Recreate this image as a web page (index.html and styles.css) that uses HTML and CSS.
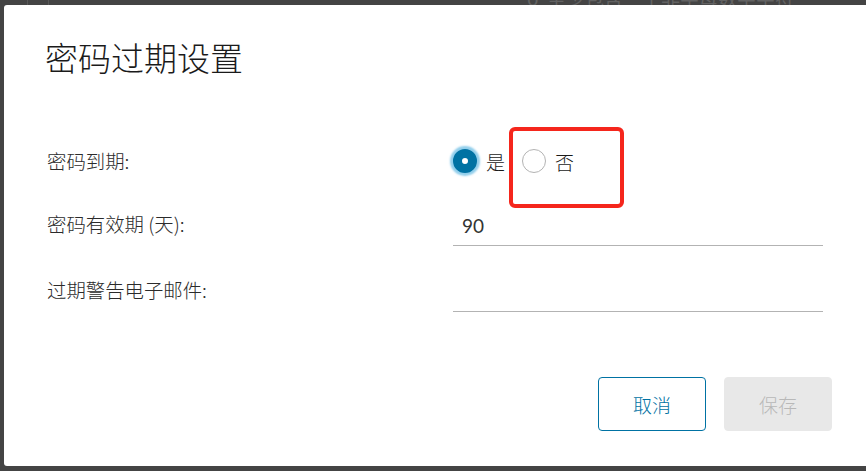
FILE: index.html
```html
<!DOCTYPE html>
<html lang="zh-CN">
<head>
<meta charset="utf-8">
<title>密码过期设置</title>
<link rel="stylesheet" href="styles.css">
</head>
<body>
  <div class="backdrop">
    <span class="hint">o&nbsp;&nbsp;至少包含一个非字母数字字符</span>
    <i class="vline vline-a"></i>
    <i class="vline vline-b"></i>
  </div>

  <div class="modal">
    <h1 class="modal-title">密码过期设置</h1>

    <div class="form">
      <div class="row row-radio">
        <div class="label">密码到期:</div>
        <div class="control radios">
          <label class="option">
            <span class="radio checked"></span>
            <span class="option-text">是</span>
          </label>
          <label class="option">
            <span class="radio"></span>
            <span class="option-text">否</span>
          </label>
        </div>
      </div>

      <div class="row row-input first-input">
        <div class="label">密码有效期 (天):</div>
        <div class="control">
          <input class="text-input" type="text" value="90">
        </div>
      </div>

      <div class="row row-input second-input">
        <div class="label">过期警告电子邮件:</div>
        <div class="control">
          <input class="text-input" type="text" value="">
        </div>
      </div>
    </div>

    <div class="footer">
      <button class="btn btn-outline">取消</button>
      <button class="btn btn-disabled" disabled>保存</button>
    </div>
  </div>

  <div class="annotation"></div>
</body>
</html>
```

FILE: styles.css
```css
html, body {
  margin: 0;
  width: 866px;
  height: 471px;
  overflow: hidden;
}

body {
  position: relative;
  background: #444444;
  padding: 5px 0 0 4px;
  box-sizing: border-box;
  font-family: "Noto Sans CJK SC", "Noto Sans", sans-serif;
}

.backdrop {
  position: absolute;
  inset: 0;
}

.hint {
  position: absolute;
  left: 527px;
  top: -13px;
  font-size: 19px;
  line-height: 22px;
  color: #626262;
  white-space: nowrap;
}

.vline {
  position: absolute;
  top: 0;
  width: 1px;
  height: 5px;
  background: #585858;
}

.vline-a { left: 27px; }
.vline-b { left: 48px; }

.modal {
  position: relative;
  width: 880px;
  height: 461px;
  box-sizing: border-box;
  background: #ffffff;
  border-radius: 3px;
  padding: 30px 52px 0 41px;
}

.modal-title {
  margin: 0;
  font-size: 33px;
  line-height: 44px;
  font-weight: 300;
  color: #1a1a1a;
}

.form {
  margin-top: 60px;
}

.row {
  display: grid;
  grid-template-columns: 408px 370px;
  align-items: center;
}

.row-radio {
  height: 44px;
}

.row-input {
  height: 40px;
}

.first-input {
  margin-top: 23px;
}

.second-input {
  margin-top: 26px;
}

.label {
  padding-left: 2px;
  font-size: 19.4px;
  line-height: 24px;
  font-weight: 300;
  color: #2b2b2b;
}

.row-input .label {
  padding-bottom: 4px;
}

.control {
  height: 100%;
}

.radios {
  display: flex;
  align-items: center;
}

.option {
  display: flex;
  align-items: center;
  gap: 9px;
  margin-right: 17px;
  font-size: 19px;
  font-weight: 300;
  color: #1a1a1a;
}

.radio {
  width: 24px;
  height: 24px;
  box-sizing: border-box;
  border-radius: 50%;
  border: 1px solid #b3b3b3;
  background: #ffffff;
}

.radio.checked {
  border: 9px solid #0072a3;
  background: #ffffff;
  box-shadow: 0 0 2px 3px rgba(108, 190, 228, 0.75);
}

.text-input {
  display: block;
  width: 100%;
  height: 40px;
  box-sizing: border-box;
  margin: 0;
  padding: 0 9px;
  border: none;
  border-bottom: 1px solid #b3b3b3;
  outline: none;
  background: transparent;
  font-family: Lato, "Noto Sans CJK SC", sans-serif;
  font-size: 19px;
  color: #333333;
}

.footer {
  display: flex;
  justify-content: flex-end;
  gap: 18px;
  margin-top: 65px;
}

.btn {
  width: 108px;
  height: 54px;
  box-sizing: border-box;
  border-radius: 4px;
  font-family: "Noto Sans CJK SC", sans-serif;
  font-size: 19px;
  font-weight: 300;
  padding: 0;
}

.btn-outline {
  background: #ffffff;
  border: 1px solid #0072a3;
  color: #0072a3;
}

.btn-disabled {
  background: #e8e8e8;
  border: 1px solid #e8e8e8;
  color: #b8b8b8;
}

.annotation {
  position: absolute;
  left: 509px;
  top: 127px;
  width: 115px;
  height: 81px;
  box-sizing: border-box;
  border: 4px solid #f5261c;
  border-radius: 6px;
}
```
